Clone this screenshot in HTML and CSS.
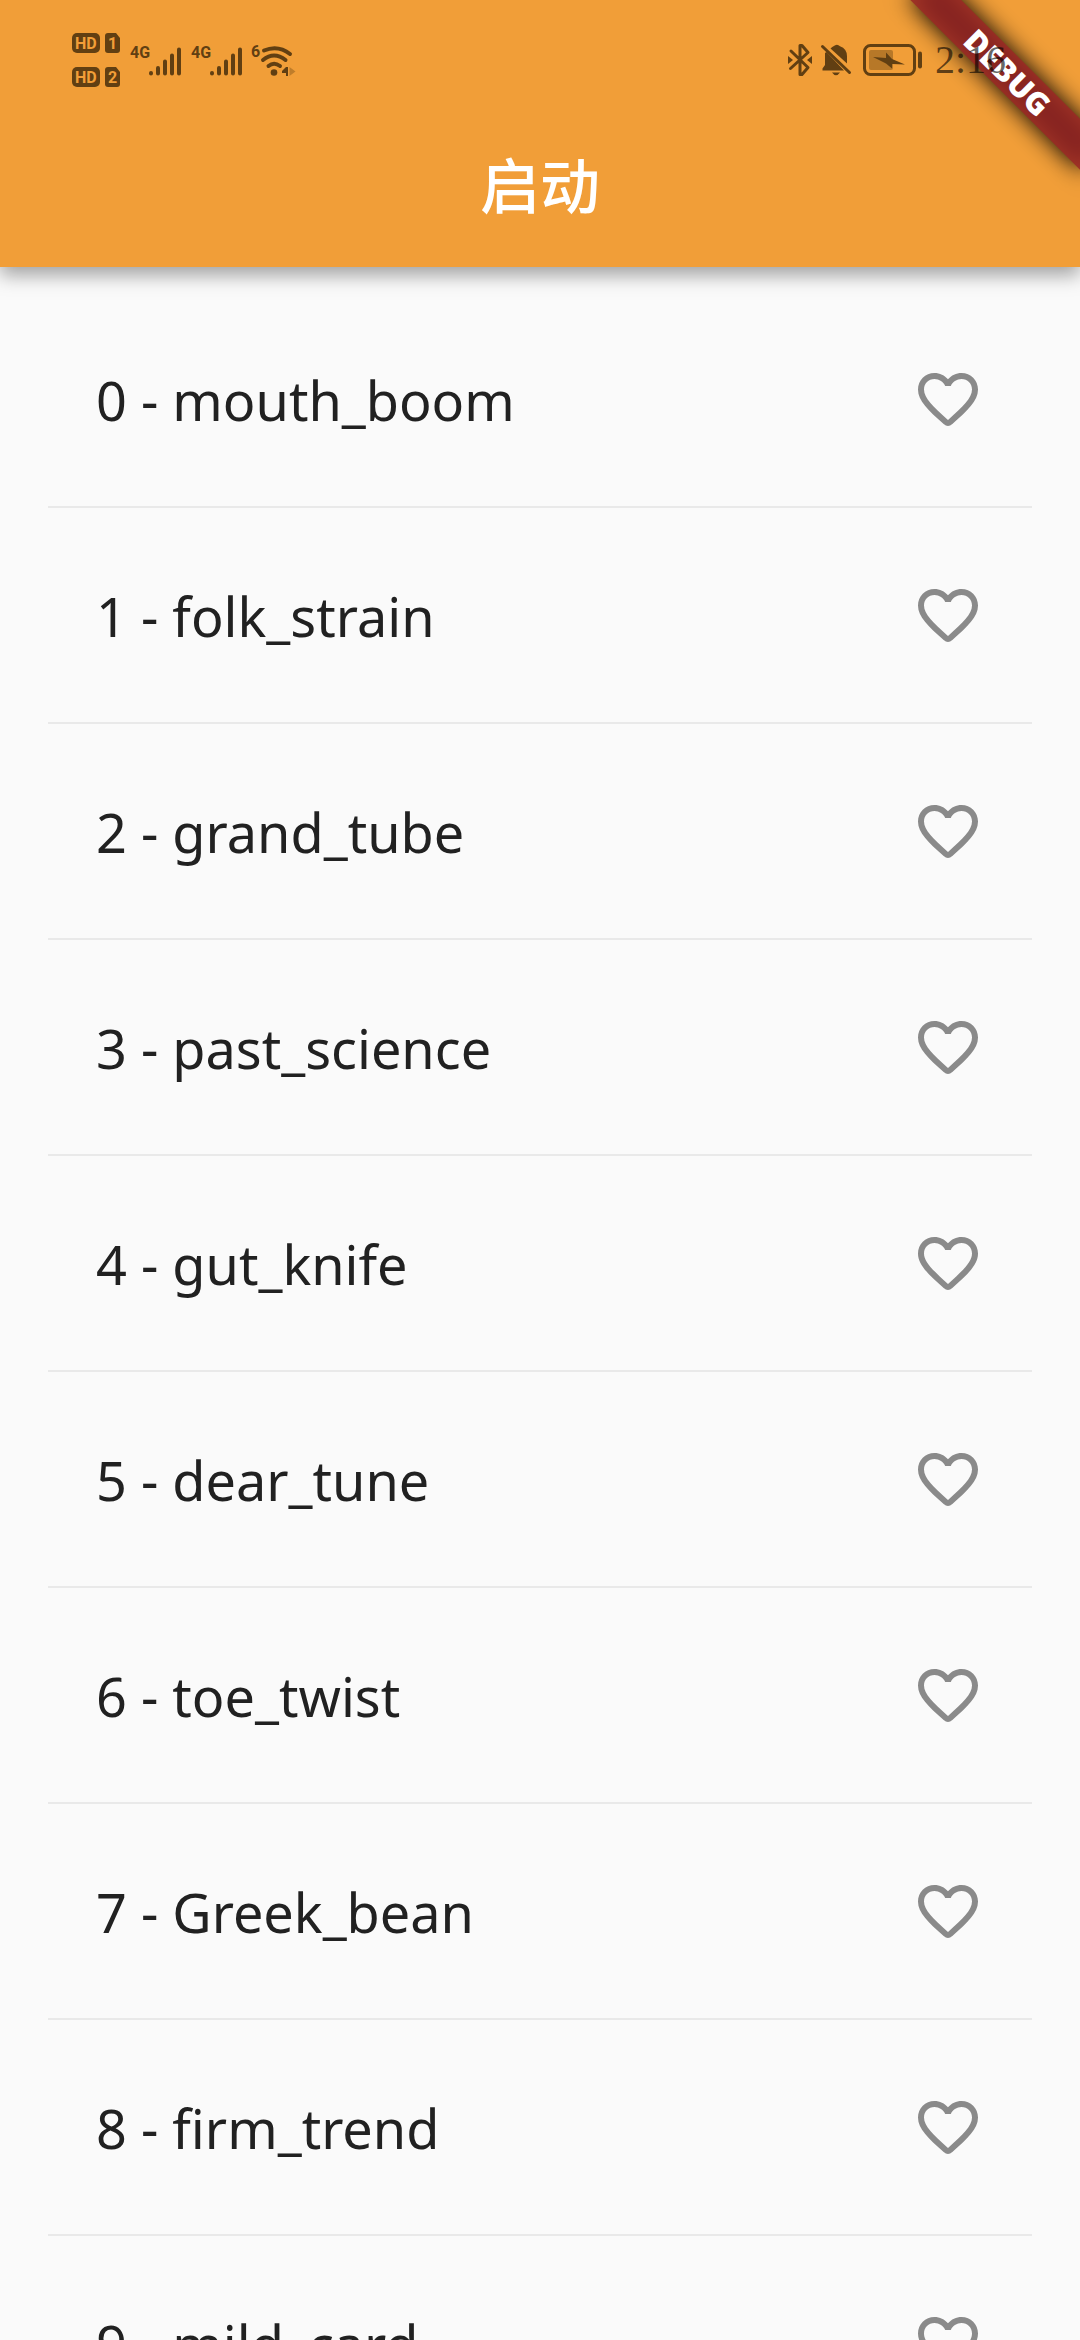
FILE: index.html
```html
<!DOCTYPE html>
<html lang="zh-CN">
<head>
<meta charset="utf-8">
<meta name="viewport" content="width=device-width, initial-scale=1">
<title>启动</title>
<link rel="stylesheet" href="styles.css">
</head>
<body>
<svg class="symbols" aria-hidden="true">
  <symbol id="heart" viewBox="0 0 24 24">
    <path d="M16.5 3c-1.74 0-3.41.81-4.5 2.09C10.91 3.81 9.24 3 7.5 3 4.42 3 2 5.42 2 8.5c0 3.78 3.4 6.86 8.55 11.54.98.87 1.92.87 2.9 0C18.6 15.36 22 12.28 22 8.500 22 5.420 19.580 3 16.500 3zm-4.400 15.550l-.1.1-.1-.1C7.140 14.240 4 11.390 4 8.500 4 6.500 5.500 5 7.500 5c1.540 0 3.040.99 3.570 2.360h1.870C13.460 5.990 14.960 5 16.500 5c2 0 3.500 1.500 3.500 3.500 0 2.890-3.140 5.740-7.900 10.050z"/>
  </symbol>
</svg>
<div class="app">
  <header class="app-bar">
    <div class="status">
      <svg class="hd" viewBox="0 0 48 54" aria-label="HD 1, HD 2">
        <rect x="0" y="0" width="28" height="20" rx="5"/>
        <path d="M36 0h8l4 5v12q0 3-3 3h-9q-3 0-3-3V3q0-3 3-3z"/>
        <rect x="0" y="34" width="28" height="20" rx="5"/>
        <path d="M36 34h8l4 5v12q0 3-3 3h-9q-3 0-3-3V37q0-3 3-3z"/>
        <text x="3" y="16" class="knock">HD</text>
        <text x="36" y="16" class="knock">1</text>
        <text x="3" y="50" class="knock">HD</text>
        <text x="36" y="50" class="knock">2</text>
      </svg>
      <svg class="signal" viewBox="0 0 50 34" aria-label="4G">
        <text x="-2" y="15" class="tiny">4G</text>
        <path d="M19 30v.5M26 25v5.500M33 18.500v12M40 12.500v18M47 6.500v24" fill="none" stroke="currentColor" stroke-width="4" stroke-linecap="round"/>
      </svg>
      <svg class="signal" viewBox="0 0 50 34" aria-label="4G">
        <text x="-2" y="15" class="tiny">4G</text>
        <path d="M19 30v.5M26 25v5.500M33 18.500v12M40 12.500v18M47 6.500v24" fill="none" stroke="currentColor" stroke-width="4" stroke-linecap="round"/>
      </svg>
      <svg class="wifi" viewBox="0 0 46 34" aria-label="Wi-Fi 6">
        <text x="0" y="14" class="tiny">6</text>
        <g fill="none" stroke="currentColor" stroke-width="4" stroke-linecap="round">
          <path d="M13 7.500Q27 1.500 39 11"/>
          <path d="M12 17Q23 8 34.500 17"/>
          <path d="M17.500 23Q23 18.500 29 23"/>
        </g>
        <circle cx="23" cy="29.500" r="3.300"/>
        <path d="M37 24v9h-2v-3h-4v-2l4-4z"/>
        <path d="M38.500 24l6 4.500-6 4.500z" opacity=".35"/>
      </svg>
      <span class="grow"></span>
      <svg class="bluetooth" viewBox="0 0 24 34" aria-label="Bluetooth">
        <path d="M3 8L20 24.500 14 31.500H12V2.500H14L20 9.500 2.500 25.500" fill="none" stroke="currentColor" stroke-width="3" stroke-linejoin="round" stroke-linecap="round"/>
        <path d="M0 13l5 4-5 4zM24 13l-5 4 5 4z"/>
      </svg>
      <svg class="bell" viewBox="0 0 30 34" aria-label="Muted">
        <path d="M5.500 9L23 27.500H1.500v-2L4 22V10zM9.500 5.500q2-2 3-2.200Q16 0 19 3.300q7 2.500 7 10V20.500zM11 29.500h8q-4 5.500-8 0z"/>
        <path d="M1.500 3.500l27 26" fill="none" stroke="currentColor" stroke-width="3" stroke-linecap="round"/>
      </svg>
      <svg class="battery" viewBox="0 0 60 34" aria-label="Charging">
        <rect x="1.500" y="2.500" width="50" height="29" rx="6" fill="none" stroke="currentColor" stroke-width="3"/>
        <rect x="6" y="7" width="24" height="20" rx="2" opacity=".4"/>
        <path d="M10 14l13 1V9.500l6 6.500 13 5.500-13-.5V25.500l-6-5z"/>
        <rect x="55" y="8.500" width="4" height="17" rx="2"/>
      </svg>
      <time class="clock">2:16</time>
    </div>
    <h1 class="title">启动</h1>
    <div class="corner"><span class="ribbon">DEBUG</span></div>
  </header>
  <ul class="list">
    <li class="row"><span>0 - mouth_boom</span><button class="like" aria-label="Favorite mouth_boom"><svg><use href="#heart"/></svg></button></li>
    <li class="row"><span>1 - folk_strain</span><button class="like" aria-label="Favorite folk_strain"><svg><use href="#heart"/></svg></button></li>
    <li class="row"><span>2 - grand_tube</span><button class="like" aria-label="Favorite grand_tube"><svg><use href="#heart"/></svg></button></li>
    <li class="row"><span>3 - past_science</span><button class="like" aria-label="Favorite past_science"><svg><use href="#heart"/></svg></button></li>
    <li class="row"><span>4 - gut_knife</span><button class="like" aria-label="Favorite gut_knife"><svg><use href="#heart"/></svg></button></li>
    <li class="row"><span>5 - dear_tune</span><button class="like" aria-label="Favorite dear_tune"><svg><use href="#heart"/></svg></button></li>
    <li class="row"><span>6 - toe_twist</span><button class="like" aria-label="Favorite toe_twist"><svg><use href="#heart"/></svg></button></li>
    <li class="row"><span>7 - Greek_bean</span><button class="like" aria-label="Favorite Greek_bean"><svg><use href="#heart"/></svg></button></li>
    <li class="row"><span>8 - firm_trend</span><button class="like" aria-label="Favorite firm_trend"><svg><use href="#heart"/></svg></button></li>
    <li class="row"><span>9 - mild_card</span><button class="like" aria-label="Favorite mild_card"><svg><use href="#heart"/></svg></button></li>
  </ul>
</div>
</body>
</html>
```

FILE: styles.css
```css
* {
  box-sizing: border-box;
}

body {
  margin: 0;
  background: #fafafa;
  color: #212121;
  font-family: "Noto Sans", "Noto Sans CJK SC", sans-serif;
}

svg {
  display: block;
  flex: none;
  overflow: visible;
  fill: currentColor;
}

.symbols {
  position: absolute;
  width: 0;
  height: 0;
}

.app {
  display: flex;
  flex-direction: column;
  height: 100vh;
  overflow: hidden;
}

.app-bar {
  position: relative;
  z-index: 1;
  flex: none;
  background: #f19e38;
  box-shadow: 0 8px 18px rgba(0, 0, 0, 0.36);
}

.status {
  display: flex;
  align-items: center;
  height: 99px;
  padding: 20px 74px 0 72px;
  color: #613f12;
}

.hd {
  width: 48px;
  height: 54px;
  margin-right: 12px;
}

.signal {
  width: 50px;
  height: 34px;
  margin-right: 11px;
}

.wifi {
  width: 46px;
  height: 34px;
  margin-left: -3px;
}

.tiny {
  font: bold 16px Roboto, sans-serif;
}

.knock {
  font: bold 16px Roboto, sans-serif;
  fill: #f19e38;
}

.grow {
  flex: 1;
}

.bluetooth {
  width: 24px;
  height: 34px;
  margin-right: 9px;
}

.bell {
  width: 30px;
  height: 34px;
  margin-right: 12px;
}

.battery {
  width: 60px;
  height: 34px;
  margin-right: 12px;
}

.clock {
  position: relative;
  z-index: 2;
  color: rgba(0, 0, 0, 0.6);
  font: 40px/40px "Liberation Serif", serif;
}

.title {
  margin: 0;
  color: #fff;
  font: 500 60px/168px "Noto Sans CJK SC", sans-serif;
  text-align: center;
}

.corner {
  position: absolute;
  top: 0;
  right: 0;
  width: 200px;
  height: 200px;
  overflow: hidden;
}

.ribbon {
  position: absolute;
  top: 84px;
  left: 80px;
  width: 240px;
  height: 36px;
  transform: rotate(45deg);
  transform-origin: 120px -84px;
  color: #fff;
  font: 900 31px/36px "Noto Sans", sans-serif;
  text-align: center;
}

.ribbon::before,
.ribbon::after {
  content: "";
  position: absolute;
  inset: 0;
  z-index: -1;
}

.ribbon::before {
  background: #000;
  filter: blur(12px);
}

.ribbon::after {
  background: rgba(156, 40, 38, 0.85);
}

.list {
  flex: 1;
  min-height: 0;
  margin: 0;
  padding: 25px 48px;
  overflow: hidden;
  list-style: none;
}

.row {
  display: flex;
  align-items: center;
  justify-content: space-between;
  height: 216px;
  padding: 0 48px;
  background: linear-gradient(#e9e9e9, #e9e9e9) bottom / 100% 2px no-repeat;
  font-size: 54px;
  line-height: 72px;
}

.like {
  padding: 0;
  border: 0;
  background: none;
  color: #8a8a8a;
}

.like svg {
  width: 72px;
  height: 72px;
}
```
